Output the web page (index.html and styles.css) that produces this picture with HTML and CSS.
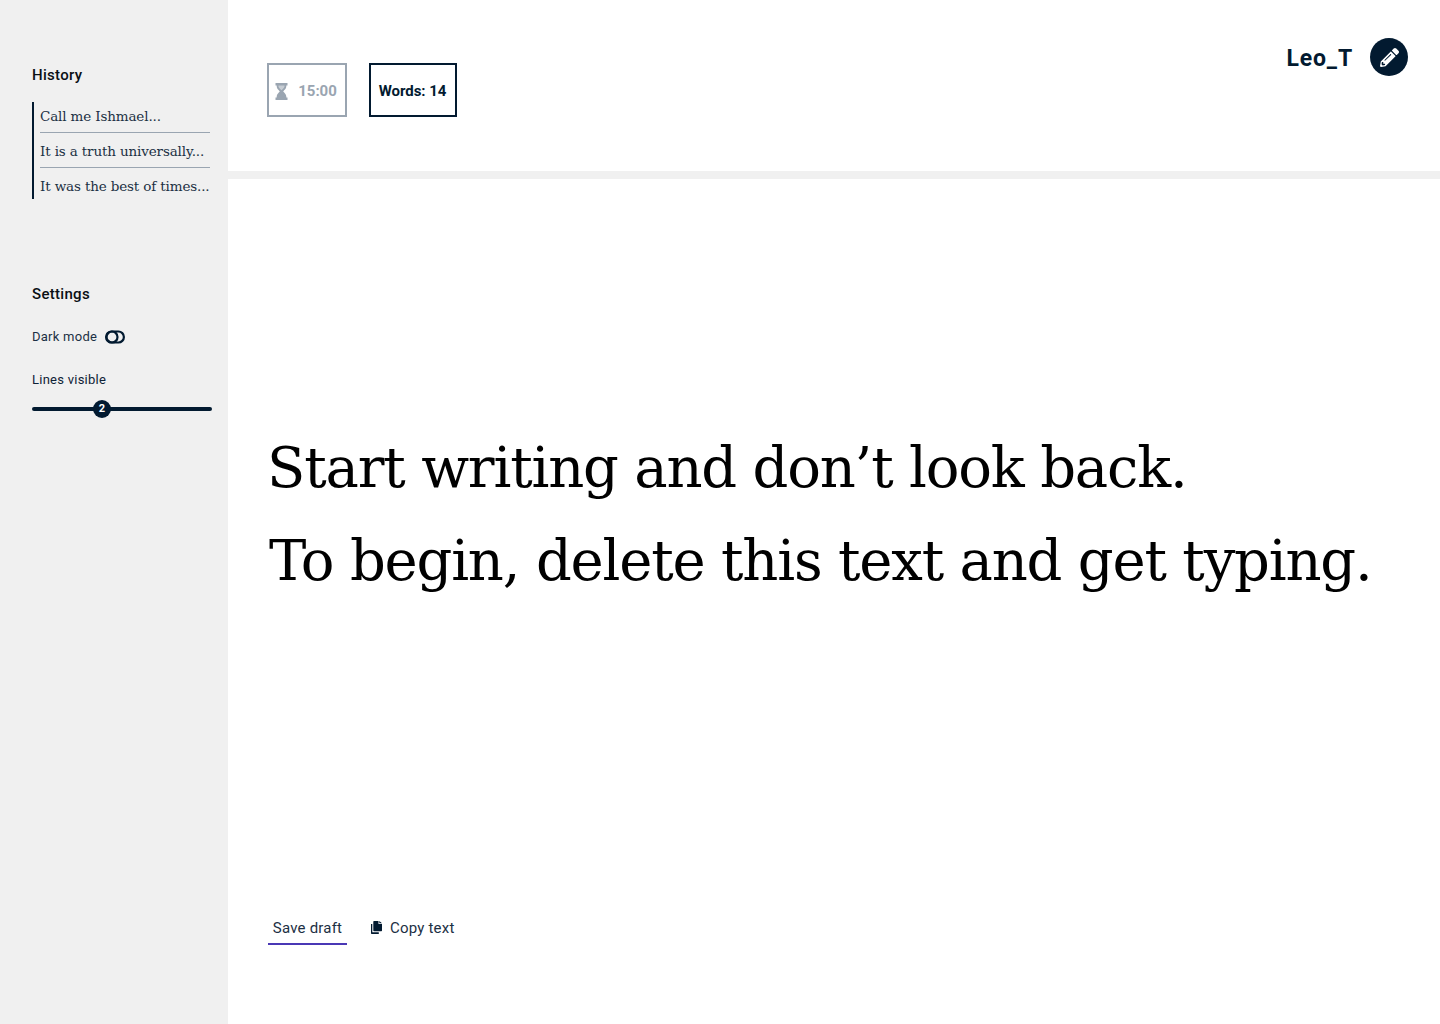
FILE: index.html
```html
<!DOCTYPE html>
<html lang="en">
<head>
<meta charset="utf-8">
<title>Writer</title>
<link rel="stylesheet" href="styles.css">
</head>
<body>
<div class="app">
  <aside class="sidebar">
    <h2 class="side-title history-title">History</h2>
    <ul class="history">
      <li class="history-item">Call me Ishmael...</li>
      <li class="history-item">It is a truth universally...</li>
      <li class="history-item">It was the best of times...</li>
    </ul>
    <h2 class="side-title settings-title">Settings</h2>
    <div class="toggle-row">
      <span class="setting-label">Dark mode</span>
      <svg class="toggle" width="20" height="14" viewBox="0 0 20 14"><rect x="1.100" y="1.500" width="17.800" height="11" rx="5.500" fill="none" stroke="#021a30" stroke-width="2.200"/><circle cx="7" cy="7" r="5.500" fill="none" stroke="#021a30" stroke-width="2.200"/></svg>
    </div>
    <div class="setting-label lines-label">Lines visible</div>
    <div class="slider"><span class="knob">2</span></div>
  </aside>
  <main class="main">
    <header class="topbar">
      <div class="stats">
        <div class="stat stat-timer">
          <svg width="13" height="17" viewBox="0 0 13 17"><path d="M.5 0h12v2.400h-1.200v1.200c0 2.200-1.900 3.500-3.100 4.900 1.200 1.400 3.100 2.700 3.100 4.900v1.200h1.200V17H.5v-2.400h1.200v-1.200c0-2.200 1.900-3.500 3.100-4.900C3.600 7.100 1.700 5.800 1.700 3.600V2.400H.5z" fill="#9aa5b1"/><path d="M3.500 2.400h6v1.200c0 1.100-1.600 2.400-3 3.700-1.400-1.300-3-2.600-3-3.700z" fill="#fff" opacity=".45"/></svg>
          <span>15:00</span>
        </div>
        <div class="stat stat-words">Words: 14</div>
      </div>
      <div class="user">
        <span class="username">Leo_T</span>
        <span class="avatar">
          <svg width="19" height="19" viewBox="0 0 512 512"><path fill="#fff" d="M497.900 142.100l-46.100 46.100c-4.700 4.700-12.300 4.700-17 0l-111-111c-4.700-4.700-4.700-12.300 0-17l46.100-46.100c18.700-18.700 49.100-18.700 67.900 0l60.100 60.100c18.800 18.700 18.800 49.100 0 67.900zM284.200 99.800L21.600 362.400.4 483.900c-2.900 16.400 11.400 30.600 27.800 27.800l121.500-21.300 262.600-262.600c4.700-4.700 4.700-12.300 0-17l-111-111c-4.800-4.700-12.400-4.700-17.100 0zM124.100 339.900c-5.500-5.500-5.500-14.300 0-19.800l154-154c5.500-5.500 14.300-5.500 19.800 0s5.500 14.300 0 19.800l-154 154c-5.500 5.500-14.300 5.500-19.800 0zM88 424h48v36.300l-64.500 11.300-31.100-31.100L51.700 376H88v48z"/></svg>
        </span>
      </div>
    </header>
    <section class="editor">
      <p class="editor-line editor-line-first">Start writing and don’t look back.</p>
      <p class="editor-line">To begin, delete this text and get typing.</p>
    </section>
    <footer class="actions">
      <button class="action action-save">Save draft</button>
      <button class="action action-copy">
        <svg class="copy-icon" width="11" height="13" viewBox="0 0 11 13"><path d="M3 0h4.500v3H11v6.500a.7.7 0 0 1-.7.700H3a.7.7 0 0 1-.7-.7V.7A.7.7 0 0 1 3 0zM8.300 0L11 2.300H8.300zM0 3h1.300v8.300h6.500V13H.7a.7.7 0 0 1-.7-.7z" fill="#021a30"/></svg>
        <span>Copy text</span>
      </button>
    </footer>
  </main>
</div>
</body>
</html>
```
FILE: styles.css
```css
* { box-sizing: border-box; }
html, body { margin: 0; height: 100%; background: #fff; }
body { font-family: Roboto, "Liberation Sans", sans-serif; color: #021a30; overflow: hidden; }
.app { display: flex; height: 1024px; }

.sidebar { width: 228px; flex: none; background: #f0f0f0; padding: 66px 16px 0 32px; display: flex; flex-direction: column; align-items: flex-start; }
.side-title { margin: 0; font-size: 15px; line-height: 18px; font-weight: 500; letter-spacing: .3px; color: #0a0f14; }
.history { list-style: none; margin: 18px 0 0; padding: 0 0 0 6px; border-left: 2px solid #021a30; width: 178px; height: 97px; }
.history-item { font-family: "DejaVu Serif", serif; font-size: 13.5px; letter-spacing: -.14px; line-height: 28px; padding: 4px 0 2px; color: #1c3044; border-bottom: 1px solid #9aa5b1; white-space: nowrap; }
.history-item:first-child { padding-top: 0; }
.history-item:last-child { border-bottom: 0; padding-bottom: 0; }
.settings-title { margin-top: 86px; }
.toggle-row { display: flex; align-items: center; gap: 8px; margin-top: 26px; height: 16px; }
.setting-label { font-size: 13px; line-height: 16px; letter-spacing: .25px; color: #1c3044; }
.lines-label { margin-top: 27px; color: #0f2236; }
.slider { margin-top: 19px; width: 180px; height: 4px; background: #021a30; border-radius: 2px; position: relative; }
.knob { position: absolute; left: 61px; top: -7px; width: 18px; height: 18px; border-radius: 50%; background: #021a30; color: #fff; font-size: 11px; font-weight: 700; line-height: 18px; text-align: center; }

.main { flex: 1; display: flex; flex-direction: column; min-width: 0; }
.topbar { height: 179px; flex: none; border-bottom: 8px solid #f0f0f0; padding: 38px 32px 0 39px; display: flex; justify-content: space-between; align-items: flex-start; }
.stats { display: flex; gap: 22px; margin-top: 25px; }
.stat { height: 54px; border: 2px solid; display: flex; align-items: center; justify-content: center; font-size: 15px; line-height: 20px; padding-top: 2px; font-weight: 700; letter-spacing: 0; }
.stat-timer { width: 80px; border-color: #9aa5b1; color: #9aa5b1; gap: 10px; padding-right: 2px; }
.stat-words { width: 88px; border-color: #021a30; color: #021a30; white-space: nowrap; letter-spacing: -.05px; padding-right: 1px; }
.user { display: flex; align-items: center; gap: 17px; }
.username { font-size: 23px; font-weight: 700; letter-spacing: .85px; padding-top: 2px; color: #021a30; }
.avatar { width: 38px; height: 38px; border-radius: 50%; background: #021a30; display: flex; align-items: center; justify-content: center; }

.editor { flex: 1; padding: 242px 0 0 41px; }
.editor-line { margin: 0; font-family: "DejaVu Serif", serif; font-size: 56px; line-height: 93px; letter-spacing: -1.2px; color: #000; white-space: nowrap; }
.editor-line-first { text-indent: -2px; }

.actions { display: flex; gap: 24px; padding: 0 0 79px 40px; align-items: flex-start; }
.action { font-family: inherit; font-size: 15px; letter-spacing: .2px; color: #1c3044; background: none; border: 0; padding: 0; height: 32px; display: flex; align-items: center; }
.action-save { width: 79px; justify-content: center; border-bottom: 2px solid #4a38b5; }
.action-copy { gap: 8px; height: 30px; }
.copy-icon { margin-top: -2px; }
```
